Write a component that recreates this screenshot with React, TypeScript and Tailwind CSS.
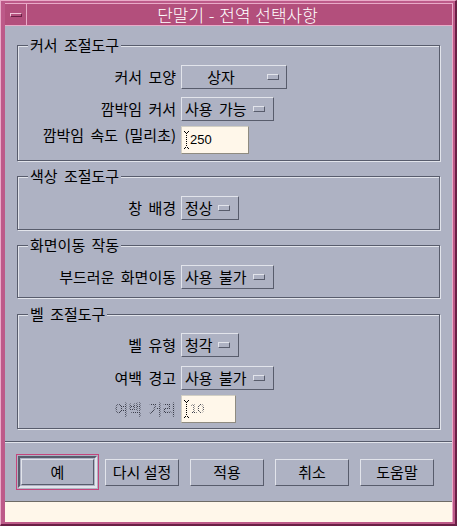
import React from "react";

// Motif/CDE style bevels
const raised =
  "border border-t-[#e2e4eb] border-l-[#e2e4eb] border-r-[#585c6c] border-b-[#585c6c]";
const sunken =
  "border-2 border-t-[#585c6c] border-l-[#585c6c] border-r-[#e2e4eb] border-b-[#e2e4eb]";
const stipple =
  "bg-[image:repeating-conic-gradient(#3a3d4a_0_25%,transparent_0_50%)] bg-[length:2px_2px] bg-clip-text text-transparent";

function Group({ title, className, children }: { title: string; className?: string; children: React.ReactNode }) {
  return (
    <div className={`relative border border-[#585c6c] shadow-[inset_1px_1px_0_#e2e4eb,1px_1px_0_#e2e4eb] ${className ?? ""}`}>
      <span className="absolute -top-[10px] left-[10px] px-[2px] bg-[#aeb2c3] leading-[18px]">{title}</span>
      {children}
    </div>
  );
}

function Row({ label, disabled, className, children }: { label: string; disabled?: boolean; className?: string; children: React.ReactNode }) {
  return (
    <div className={`flex items-center ${className ?? ""}`}>
      <span className={`w-[158px] text-right leading-[18px] ${disabled ? stipple : ""}`}>{label}</span>
      <div className="ml-[5px]">{children}</div>
    </div>
  );
}

function Indicator() {
  return <span className={`${raised} block w-[12px] h-[6px] bg-[#aeb2c3] shrink-0`} />;
}

function OptionMenu({ value, width }: { value: string; width: string }) {
  return (
    <div className={`${raised} ${width} h-[24px] flex items-center justify-between pl-[3px] pr-[8px] leading-[18px] whitespace-nowrap`}>
      <span>{value}</span>
      <Indicator />
    </div>
  );
}

function IBeam() {
  const dots = [];
  for (let y = 2; y < 16; y += 2) dots.push(<rect key={y} x={2} y={y} width={1} height={1} />);
  return (
    <svg width="5" height="18" viewBox="0 0 5 18" className="shrink-0" fill="#000">
      <rect x={0} y={0} width={1} height={1} />
      <rect x={4} y={0} width={1} height={1} />
      <rect x={1} y={1} width={1} height={1} />
      <rect x={3} y={1} width={1} height={1} />
      {dots}
      <rect x={1} y={16} width={1} height={1} />
      <rect x={3} y={16} width={1} height={1} />
      <rect x={0} y={17} width={1} height={1} />
      <rect x={4} y={17} width={1} height={1} />
    </svg>
  );
}

function TextField({ value, width, disabled }: { value: string; width: string; disabled?: boolean }) {
  return (
    <div className={`${width} h-[28px] bg-[#fff7ea] border border-t-[#d2cfc4] border-l-[#d2cfc4] border-r-[#8f8b80] border-b-[#8f8b80] flex items-center pl-[2px]`}>
      <IBeam />
      <span className={`ml-[1px] text-[13px] font-['Liberation_Sans',sans-serif] ${disabled ? stipple : ""}`}>{value}</span>
    </div>
  );
}

function PushButton({ label }: { label: string }) {
  return (
    <button className={`${raised} w-[74px] h-[27px] bg-[#aeb2c3] leading-[18px] whitespace-nowrap`}>{label}</button>
  );
}

export default function App() {
  return (
    <div className="w-[457px] h-[526px] flex flex-col bg-[#bd5a89] border-t border-l border-t-[#e9abc8] border-l-[#e9abc8] border-r-2 border-b-2 border-r-[#6a2045] border-b-[#6a2045] pt-[2px] pl-[4px] pr-[2px] pb-[2px] font-['Noto_Sans_CJK_KR','Noto_Sans',sans-serif] text-[15px] text-black [word-spacing:3px]">
      <div className="flex-1 flex flex-col border-r border-[#e9abc8] min-h-0">
        {/* Title bar */}
        <div className="h-[23px] flex bg-[#b34f7c] border-b border-[#e9abc8] shrink-0">
          <div className="w-[21px] border-t border-[#e9abc8] flex items-center justify-center">
            <span className="w-[12px] h-[4px] border border-t-[#f1c4d8] border-l-[#f1c4d8] border-r-[#6a2045] border-b-[#6a2045]" />
          </div>
          <div className="flex-1 border-t border-l border-[#e9abc8] flex items-center justify-center text-white text-[17px] leading-[20px] font-light [word-spacing:1px] pr-[4px]">
            단말기 - 전역 선택사항
          </div>
        </div>

        {/* Body */}
        <div className="h-[475px] flex flex-col bg-[#aeb2c3] shrink-0">
          <div className="pt-[19px] px-[12px] flex flex-col">
            <Group title="커서 조절도구" className="pt-[19px] pb-[6px]">
              <Row label="커서 모양">
                <div className={`${raised} w-[106px] h-[24px] flex items-center leading-[18px]`}>
                  <span className="w-[78px] text-center">상자</span>
                  <span className="ml-[7px] block"><Indicator /></span>
                </div>
              </Row>
              <Row label="깜박임 커서" className="mt-[8px]">
                <OptionMenu value="사용 가능" width="w-[93px]" />
              </Row>
              <Row label="깜박임 속도 (밀리초)" className="mt-[5px] !items-start">
                <TextField value="250" width="w-[68px]" />
              </Row>
            </Group>

            <Group title="색상 조절도구" className="mt-[15px] pt-[19px] pb-[9px]">
              <Row label="창 배경">
                <OptionMenu value="정상" width="w-[58px]" />
              </Row>
            </Group>

            <Group title="화면이동 작동" className="mt-[15px] pt-[19px] pb-[8px]">
              <Row label="부드러운 화면이동">
                <OptionMenu value="사용 불가" width="w-[93px]" />
              </Row>
            </Group>

            <Group title="벨 조절도구" className="mt-[16px] pt-[18px] pb-[5px]">
              <Row label="벨 유형">
                <OptionMenu value="청각" width="w-[58px]" />
              </Row>
              <Row label="여백 경고" className="mt-[9px]">
                <OptionMenu value="사용 불가" width="w-[93px]" />
              </Row>
              <Row label="여백 거리" disabled className="mt-[5px]">
                <TextField value="10" width="w-[55px]" disabled />
              </Row>
            </Group>
          </div>

          <div className="mt-[12px] h-[2px] border-t border-b border-t-[#585c6c] border-b-[#e2e4eb]" />

          {/* Action buttons */}
          <div className="flex-1 flex items-center pl-[11px]">
            <div className="border border-[#c4457c] p-[1px]">
              <div className={`${sunken} p-[1px]`}>
                <button className={`${raised} w-[73px] h-[26px] bg-[#aeb2c3] leading-[18px]`}>예</button>
              </div>
            </div>
            <div className="ml-[6px] flex gap-[11px]">
              <PushButton label="다시 설정" />
              <PushButton label="적용" />
              <PushButton label="취소" />
              <PushButton label="도움말" />
            </div>
          </div>
        </div>

        {/* Message area */}
        <div className="flex-1 bg-[#fff7ea] border-t border-[#6e6b66]" />
      </div>
    </div>
  );
}
